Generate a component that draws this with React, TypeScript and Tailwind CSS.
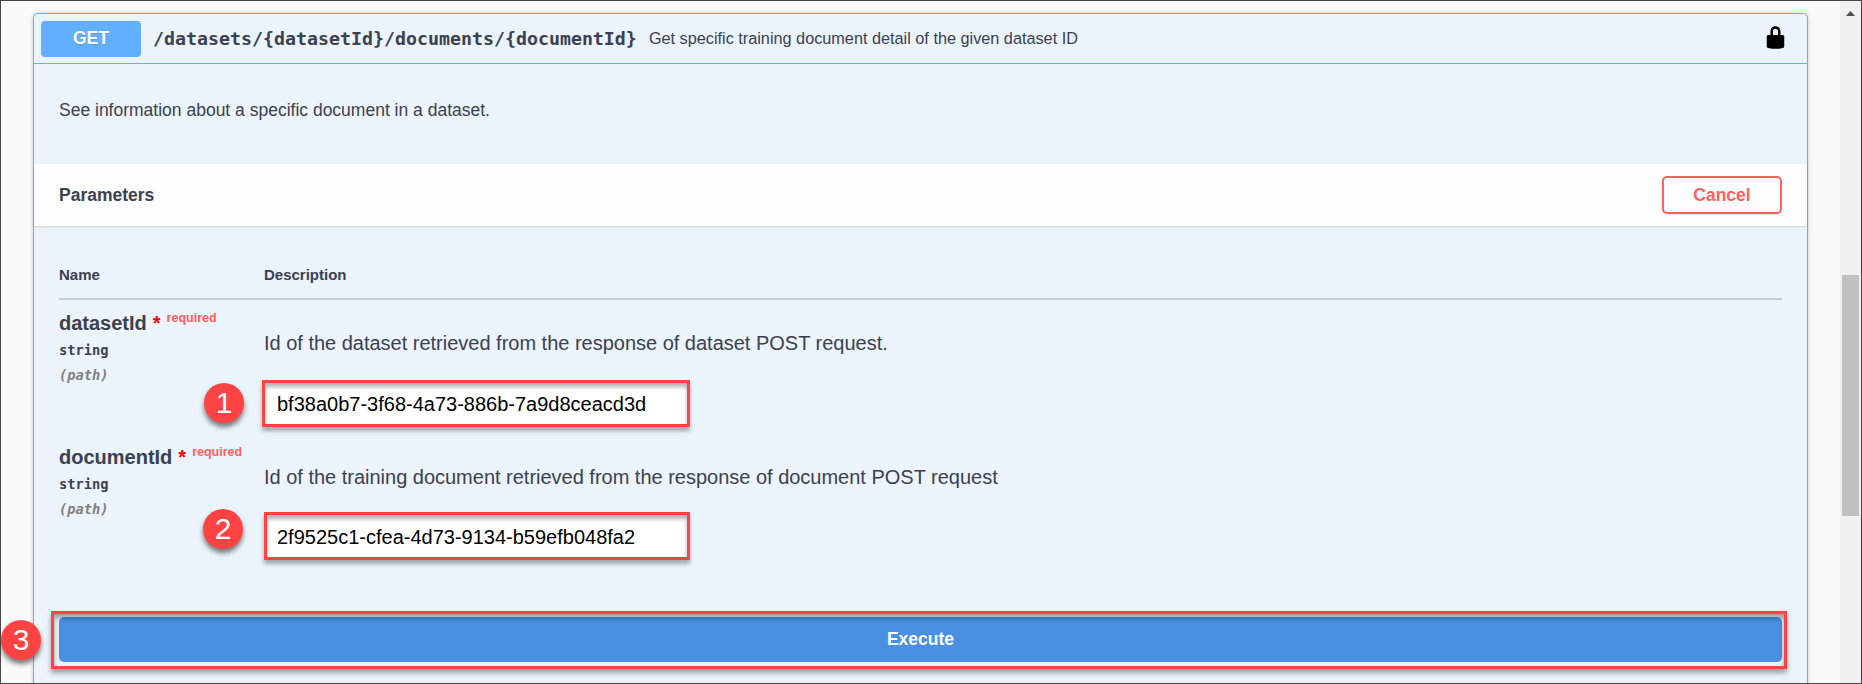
type Parameter = {
  name: string;
  description: string;
  value: string;
  fieldClass: string;
};

const parameters: Parameter[] = [
  {
    name: "datasetId",
    description: "Id of the dataset retrieved from the response of dataset POST request.",
    value: "bf38a0b7-3f68-4a73-886b-7a9d8ceacd3d",
    fieldClass: "mt-[23px] -ml-0.5 h-[47px] w-[428px] pl-3",
  },
  {
    name: "documentId",
    description: "Id of the training document retrieved from the response of document POST request",
    value: "2f9525c1-cfea-4d73-9134-b59efb048fa2",
    fieldClass: "mt-[21px] h-12 w-[426px] pt-0.5 pl-2.5",
  },
];

function Badge({ label, className }: { label: string; className: string }) {
  return (
    <div
      className={`absolute flex size-10 items-center justify-center rounded-full bg-[#ff4343] text-[30px] leading-none text-white shadow-[0_4px_5px_rgba(0,0,0,0.5)] ${className}`}
    >
      {label}
    </div>
  );
}

function LockIcon() {
  return (
    <svg viewBox="0 0 20 20" className="mb-[3px] size-[25px]" fill="#000">
      <path d="M15.8 8H14V5.6C14 2.703 12.665 1 10 1 7.334 1 6 2.703 6 5.6V8H4c-.553 0-1 .646-1 1.199V17c0 .549.428 1.139.951 1.307l1.197.387C5.672 18.861 6.55 19 7.1 19h5.8c.549 0 1.428-.139 1.951-.307l1.196-.387c.524-.167.953-.757.953-1.306V9.199C17 8.646 16.352 8 15.8 8zM12 8H8V5.199C8 3.754 8.797 3 10 3c1.203 0 2 .754 2 2.199V8z" />
    </svg>
  );
}

function ParameterRow({ name, description, value, fieldClass }: Parameter) {
  return (
    <div className="grid h-[134px] grid-cols-[205px_1fr]">
      <div className="pt-[9px]">
        <div className="flex h-7 text-xl leading-7 font-bold">
          {name}
          <span className="ml-1.5 text-[#ff0000]">*</span>
          <span className="-mt-[5px] ml-1.5 text-[12.5px] text-[#ff5f5f]">required</span>
        </div>
        <div className="mt-px font-['DejaVu_Sans_Mono',monospace] text-[13.7px] leading-6 font-bold">
          string
        </div>
        <div className="mt-px font-['DejaVu_Sans_Mono',monospace] text-[13.7px] leading-6 font-bold text-[#808080] italic">
          (path)
        </div>
      </div>
      <div className="pt-[29px]">
        <p className="text-xl leading-7 tracking-[-0.01px]">{description}</p>
        <div
          className={`flex items-center border-3 border-[#ff4343] bg-white text-xl text-black shadow-[0_4px_4px_rgba(0,0,0,0.3),inset_0_4px_4px_rgba(0,0,0,0.3)] ${fieldClass}`}
        >
          {value}
        </div>
      </div>
    </div>
  );
}

export default function App() {
  return (
    <div className="relative flex h-[684px] w-full overflow-hidden border border-[#464649] bg-[#fafafa] font-['Liberation_Sans',Arial,sans-serif] text-[#3b4151]">
      <main className="min-w-0 flex-1 px-8 pt-3">
        <section className="h-[690px] rounded-t-[5px] border border-[#61affe] bg-[#ebf3fb] shadow-[0_0_4px_rgba(0,0,0,0.19)]">
          <header className="flex h-[50px] items-center border-b border-[#61affe] pr-[19px] pl-[7px]">
            <span className="flex h-9 w-[100px] items-center justify-center rounded-[4px] bg-[#61affe] pb-px text-[17.5px] font-bold text-white [text-shadow:0_1px_0_rgba(0,0,0,0.1)]">
              GET
            </span>
            <span className="ml-3 font-['DejaVu_Sans_Mono',monospace] text-[18.27px] font-bold">
              {"/datasets/{datasetId}/documents/{documentId}"}
            </span>
            <span className="ml-3 flex-1 text-[16.25px]">
              Get specific training document detail of the given dataset ID
            </span>
            <LockIcon />
          </header>

          <p className="h-[100px] px-[25px] pt-8 text-[17.5px] leading-7">
            See information about a specific document in a dataset.
          </p>

          <div className="flex h-[62px] items-center justify-between bg-[#fcfdfe] px-[25px] shadow-[0_1px_2px_rgba(0,0,0,0.15)]">
            <h4 className="text-[17.5px] font-bold">Parameters</h4>
            <button className="h-[38px] w-[120px] rounded-[5px] border-2 border-[#ff6060] text-[17.5px] font-bold text-[#ff6060] shadow-[0_1px_2px_rgba(0,0,0,0.1)]">
              Cancel
            </button>
          </div>

          <div className="px-[25px]">
            <div className="grid h-[74px] grid-cols-[205px_1fr] border-b-2 border-[#c4ccd8] pt-[39px] text-[15px] leading-5 font-bold">
              <span>Name</span>
              <span>Description</span>
            </div>
            {parameters.map((p) => (
              <ParameterRow key={p.name} {...p} />
            ))}
            <div className="relative mt-[43px] -mr-[5px] -ml-2 h-[58px] border-3 border-[#ff4343] pt-[3px] pr-0.5 pl-[5px] shadow-[0_4px_5px_rgba(0,0,0,0.35)]">
              <button className="h-[45px] w-full rounded-[5px] bg-[#4990e2] text-[17.5px] font-bold text-white">
                Execute
              </button>
              <div className="absolute inset-0 shadow-[inset_0_4px_5px_rgba(0,0,0,0.35)]" />
            </div>
          </div>
        </section>
      </main>

      <aside className="flex w-[21px] flex-col items-center bg-[#f0f0f0]">
        <svg viewBox="0 0 9 5" className="mt-2.5 h-[5px] w-[9px]" fill="#505050">
          <path d="M0 5 4.5 0 9 5z" />
        </svg>
        <div className="mt-[259px] h-[241px] w-[17px] bg-[#c1c1c1]" />
      </aside>

      <Badge label="1" className="top-[382px] left-[203px]" />
      <Badge label="2" className="top-[508px] left-[202px]" />
      <Badge label="3" className="top-[619px] left-0" />
    </div>
  );
}
